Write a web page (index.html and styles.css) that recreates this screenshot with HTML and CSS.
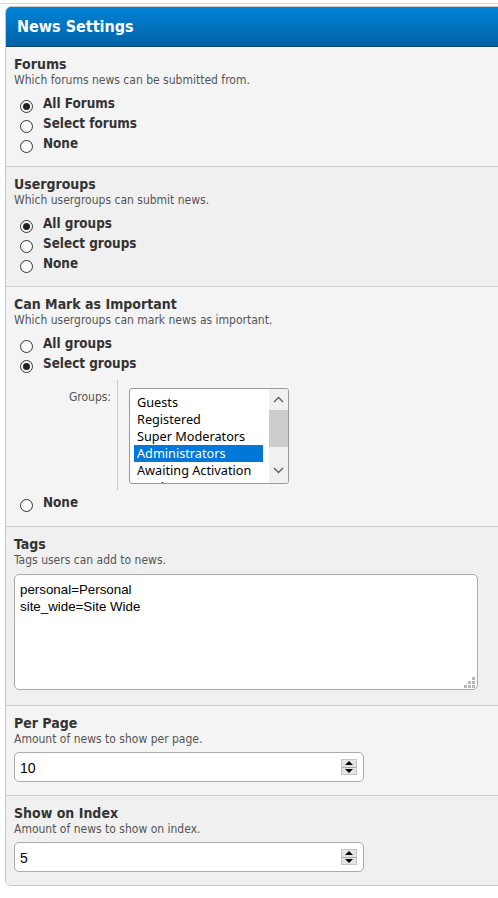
FILE: index.html
```html
<!DOCTYPE html>
<html>
<head>
<meta charset="utf-8">
<link rel="stylesheet" href="styles.css">
</head>
<body>
<div class="topline"></div>
<div class="panel">
  <div class="panel-head">News Settings</div>

  <div class="row light">
    <div class="row-title">Forums</div>
    <div class="row-desc">Which forums news can be submitted from.</div>
    <ul class="radios">
      <li class="radio"><span class="circle checked"></span>All Forums</li>
      <li class="radio"><span class="circle"></span>Select forums</li>
      <li class="radio"><span class="circle"></span>None</li>
    </ul>
  </div>

  <div class="row dark">
    <div class="row-title">Usergroups</div>
    <div class="row-desc">Which usergroups can submit news.</div>
    <ul class="radios">
      <li class="radio"><span class="circle checked"></span>All groups</li>
      <li class="radio"><span class="circle"></span>Select groups</li>
      <li class="radio"><span class="circle"></span>None</li>
    </ul>
  </div>

  <div class="row light">
    <div class="row-title">Can Mark as Important</div>
    <div class="row-desc">Which usergroups can mark news as important.</div>
    <ul class="radios">
      <li class="radio"><span class="circle"></span>All groups</li>
      <li class="radio"><span class="circle checked"></span>Select groups</li>
    </ul>
    <div class="groups">
      <div class="groups-label">Groups:</div>
      <div class="groups-field">
        <div class="listbox">
          <ul class="options">
            <li>Guests</li>
            <li>Registered</li>
            <li>Super Moderators</li>
            <li class="selected">Administrators</li>
            <li>Awaiting Activation</li>
            <li>Moderators</li>
          </ul>
          <div class="scrollbar">
            <svg class="arrow" width="11" height="7" viewBox="0 0 11 7"><path d="M1 6 L5.5 1.5 L10 6" fill="none" stroke="#606060" stroke-width="1.4"/></svg>
            <div class="thumb"></div>
            <div class="track-rest"></div>
            <svg class="arrow" width="11" height="7" viewBox="0 0 11 7"><path d="M1 1 L5.5 5.5 L10 1" fill="none" stroke="#606060" stroke-width="1.4"/></svg>
          </div>
        </div>
      </div>
    </div>
    <ul class="radios radios-last">
      <li class="radio"><span class="circle"></span>None</li>
    </ul>
  </div>

  <div class="row dark">
    <div class="row-title">Tags</div>
    <div class="row-desc">Tags users can add to news.</div>
    <div class="textarea">
      <div>personal=Personal</div>
      <div>site_wide=Site Wide</div>
      <div class="grip">
        <span></span><span></span><span class="on"></span>
        <span></span><span class="on"></span><span class="on"></span>
        <span class="on"></span><span class="on"></span><span class="on"></span>
      </div>
    </div>
  </div>

  <div class="row light">
    <div class="row-title">Per Page</div>
    <div class="row-desc">Amount of news to show per page.</div>
    <div class="number">
      <span class="value">10</span>
      <span class="spin"><span class="up"></span><span class="down"></span></span>
    </div>
  </div>

  <div class="row dark last">
    <div class="row-title">Show on Index</div>
    <div class="row-desc">Amount of news to show on index.</div>
    <div class="number">
      <span class="value">5</span>
      <span class="spin"><span class="up"></span><span class="down"></span></span>
    </div>
  </div>
</div>
</body>
</html>
```

FILE: styles.css
```css
html, body {
  margin: 0;
  padding: 0;
  background: #ffffff;
  overflow: hidden;
}

body {
  font-family: "DejaVu Sans Condensed", "DejaVu Sans", sans-serif;
  color: #333333;
}

.topline {
  height: 1px;
  margin-top: 3px;
  background: #dcdcdc;
}

.panel {
  margin-top: 2px;
  margin-left: 5px;
  width: 520px;
  border: 1px solid #c8c8c8;
  border-radius: 6px;
  overflow: hidden;
  background: #f3f3f3;
}

.panel-head {
  height: 39px;
  line-height: 39px;
  padding-left: 11px;
  background: linear-gradient(#0083d7, #0063a7);
  border-bottom: 1px solid #16425a;
  color: #ffffff;
  font-weight: bold;
  font-size: 16px;
}

.row {
  padding: 9px 8px 13px 8px;
  border-bottom: 1px solid #cfcfcf;
}

.row.light { background: #f4f4f4; }
.row.dark { background: #f0f0f0; }
.row.last { border-bottom: none; }

.row-title {
  font-weight: bold;
  font-size: 14px;
  line-height: 16px;
  color: #333333;
}

.row-desc {
  font-size: 12px;
  line-height: 16px;
  color: #555555;
}

.radios {
  list-style: none;
  margin: 5px 0 0 0;
  padding: 0;
}

.radios-last {
  margin-top: 2px;
  padding-bottom: 1px;
}

.radio {
  display: flex;
  align-items: flex-start;
  height: 20px;
  line-height: 22px;
  font-weight: bold;
  font-size: 13.4px;
  color: #333333;
}

.circle {
  box-sizing: border-box;
  width: 13px;
  height: 13px;
  margin: 7px 10px 0 6px;
  border: 1px solid #333333;
  border-radius: 50%;
  background: radial-gradient(circle at 50% 40%, #ffffff, #f2f2f2);
  position: relative;
  flex: none;
}

.circle.checked::after {
  content: "";
  position: absolute;
  left: 2px;
  top: 2px;
  width: 7px;
  height: 7px;
  border-radius: 50%;
  background: #222222;
}

.groups {
  display: flex;
  height: 110px;
  margin-top: 7px;
}

.groups-label {
  width: 97px;
  text-align: right;
  padding-top: 10px;
  font-size: 12px;
  line-height: 15px;
  color: #555555;
}

.groups-field {
  margin-left: 6px;
  border-left: 1px solid #cccccc;
  padding: 8px 0 0 11px;
}

.listbox {
  box-sizing: border-box;
  width: 160px;
  height: 96px;
  border: 1px solid #999999;
  border-radius: 3px;
  background: #ffffff;
  display: flex;
  overflow: hidden;
}

.options {
  list-style: none;
  margin: 5px 0 0 4px;
  padding: 0;
  width: 129px;
  overflow: hidden;
  font-family: "Noto Sans", sans-serif;
  font-size: 12.7px;
  color: #000000;
}

.options li {
  height: 17px;
  line-height: 17px;
  padding-left: 3px;
  white-space: nowrap;
}

.options li.selected {
  background: #0078d7;
  color: #ffffff;
}

.scrollbar {
  margin-left: auto;
  width: 19px;
  background: #f0f0f0;
  display: flex;
  flex-direction: column;
  align-items: center;
}

.arrow {
  flex: none;
  margin: 7px 0;
}

.arrow:last-child {
  margin: 0 0 9px 0;
}

.thumb {
  width: 19px;
  height: 37px;
  background: #cdcdcd;
}

.track-rest {
  flex: 1;
}

.textarea {
  position: relative;
  box-sizing: border-box;
  margin-top: 6px;
  width: 464px;
  height: 116px;
  border: 1px solid #aaaaaa;
  border-radius: 5px;
  background: #ffffff;
  padding: 6px 5px;
  font-family: "Liberation Sans", Arial, sans-serif;
  font-size: 13.33px;
  line-height: 17px;
  color: #000000;
  margin-bottom: 2px;
}

.grip {
  position: absolute;
  right: 2px;
  bottom: 1px;
  display: grid;
  grid-template-columns: repeat(3, 3px);
  grid-auto-rows: 3px;
  gap: 1px;
}

.grip span.on {
  background: #b8b8b8;
}

.number {
  box-sizing: border-box;
  margin-top: 5px;
  width: 350px;
  height: 30px;
  border: 1px solid #aaaaaa;
  border-radius: 5px;
  background: #ffffff;
  display: flex;
  align-items: center;
  padding: 0 6px 0 5px;
  font-family: "Liberation Sans", Arial, sans-serif;
  font-size: 14px;
  color: #000000;
}

.value {
  flex: 1;
  padding-top: 1px;
}

.spin {
  box-sizing: border-box;
  width: 16px;
  height: 16px;
  background: #e4e4e4;
  border: 1px solid #c4c4c4;
  display: flex;
  flex-direction: column;
}

.spin .up,
.spin .down {
  flex: 1;
  display: flex;
  align-items: center;
  justify-content: center;
}

.spin .up {
  border-bottom: 1px solid #a8a8a8;
}

.spin .up::before {
  content: "";
  border-left: 4px solid transparent;
  border-right: 4px solid transparent;
  border-bottom: 4px solid #000000;
}

.spin .down::before {
  content: "";
  border-left: 4px solid transparent;
  border-right: 4px solid transparent;
  border-top: 4px solid #000000;
}
```
